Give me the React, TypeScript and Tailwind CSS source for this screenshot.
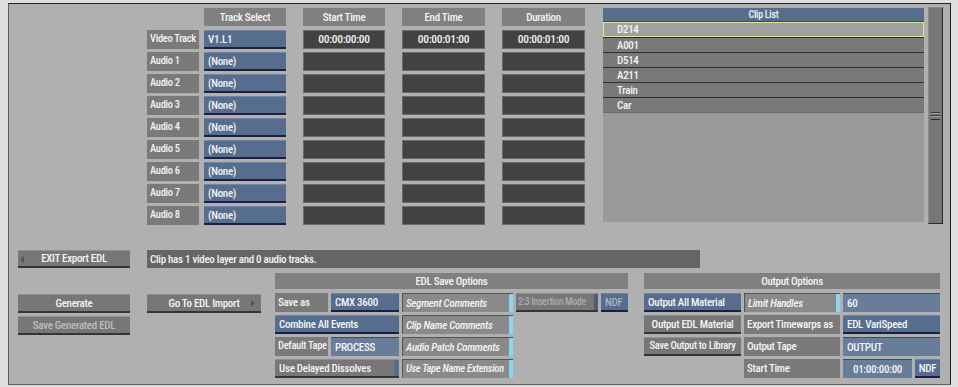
import React from "react";

const font = "font-['Liberation_Sans_Narrow','Roboto_Condensed',Roboto,sans-serif]";

const tracks = ["Video Track", "Audio 1", "Audio 2", "Audio 3", "Audio 4", "Audio 5", "Audio 6", "Audio 7", "Audio 8"];
const clips = ["D214", "A001", "D514", "A211", "Train", "Car"];

type Box = { w: string; children?: React.ReactNode; className?: string };

const Label = ({ w, children, className = "" }: Box) => (
  <div className={`${w} h-[19px] flex items-center px-[3px] bg-[#7a7a7a] text-[#f4f4f4] whitespace-nowrap overflow-hidden ${className}`}>
    {children}
  </div>
);

const BlueBtn = ({ w, children, className = "" }: Box) => (
  <div
    className={`${w} h-[19px] flex items-center px-[4px] bg-[#566d8e] border-t border-t-[#7084a3] border-b-2 border-b-[#1c2040] text-[#f4f4f4] whitespace-nowrap ${className}`}
  >
    {children}
  </div>
);

const GrayBtn = ({ w, children, className = "" }: Box) => (
  <div
    className={`${w} h-[19px] flex items-center justify-center bg-[#777777] border-t border-t-[#8e8e8e] border-b-2 border-b-[#353535] text-[#f4f4f4] whitespace-nowrap ${className}`}
  >
    {children}
  </div>
);

const Field = ({ w, children, className = "" }: Box) => (
  <div
    className={`${w} h-[19px] flex items-center px-[4px] bg-[#687d99] border-t border-t-[#3c4b60] text-[#f4f4f4] whitespace-nowrap ${className}`}
  >
    {children}
  </div>
);

const Toggle = ({ w, children, className = "" }: Box) => (
  <div className={`${w} h-[19px] flex bg-[#8a8a8a] border-t border-l border-[#555555]`}>
    <div className={`flex-1 flex items-center px-[3px] italic text-[#f4f4f4] whitespace-nowrap overflow-hidden ${className}`}>
      {children}
    </div>
    <div className="w-[4px] bg-[#86d8f2]" />
  </div>
);

const TimeCell = ({ w, children }: Box) => (
  <div className={`${w} h-[19px] flex items-center justify-center bg-[#424242] border border-[#6a6a6a] text-[#f4f4f4] text-[11.5px]`}>
    {children}
  </div>
);

const Header = ({ w, children }: Box) => (
  <div className={`${w} h-[18px] flex items-center justify-center bg-[#808080] text-[#f4f4f4]`}>{children}</div>
);

export default function App() {
  return (
    <div className={`w-[958px] h-[387px] bg-[#dedede] pt-[3px] pl-[8px] text-[11px] tracking-[-0.3px] font-medium leading-none ${font}`}>
      <div className="w-[943px] h-[382px] bg-[#b0b0b0] border border-t-[#222222] border-r-[#222222] border-l-[#5e5e5e] border-b-[#5e5e5e]">
        {/* top: track table, clip list, scrollbar */}
        <div className="h-[222px] pt-[4px] flex items-start">
          <div className="ml-[138px] flex flex-col gap-[3px]">
            <div className="flex mb-[1px]">
              <div className="w-[52px]" />
              <Header w="ml-[5px] w-[82px]">Track Select</Header>
              <Header w="ml-[17px] w-[82px]">Start Time</Header>
              <Header w="ml-[17px] w-[83px]">End Time</Header>
              <Header w="ml-[17px] w-[83px]">Duration</Header>
            </div>
            {tracks.map((t, i) => (
              <div key={t} className="flex">
                <Label w="w-[52px]" className="text-[10.5px]">{t}</Label>
                <BlueBtn w="ml-[5px] w-[82px]">{i === 0 ? "V1.L1" : "(None)"}</BlueBtn>
                <TimeCell w="ml-[17px] w-[82px]">{i === 0 ? "00:00:00:00" : ""}</TimeCell>
                <TimeCell w="ml-[17px] w-[83px]">{i === 0 ? "00:00:01:00" : ""}</TimeCell>
                <TimeCell w="ml-[17px] w-[83px]">{i === 0 ? "00:00:01:00" : ""}</TimeCell>
              </div>
            ))}
          </div>

          <div className="ml-[18px] w-[321px] h-[214px] bg-[#9a9a9a] flex flex-col">
            <div className="h-[14px] flex items-center justify-center bg-[#566d8e] border-b border-b-[#3a4a62] text-[#f4f4f4] text-[10px]">
              Clip List
            </div>
            {clips.map((c, i) => (
              <div
                key={c}
                className={
                  i === 0
                    ? "h-[15px] flex items-center pl-[13px] bg-[#a0a0a0] border border-[#e2e29a] text-[#f4f4f4]"
                    : "h-[15px] flex items-center pl-[14px] bg-[#797979] border-t border-t-[#2e2e2e] text-[#f4f4f4]"
                }
              >
                {c}
              </div>
            ))}
            <div className="h-[1px] bg-[#6c6c6c]" />
          </div>

          <div className="ml-[4px] -mt-[1px] w-[15px] h-[217px] bg-[#777777] border border-t-[#8c8c8c] border-l-[#8c8c8c] border-r-[#2a2a2a] border-b-[#2a2a2a] flex flex-col items-center justify-center">
            <div className="w-[9px] h-[1px] bg-[#3a3a3a]" />
            <div className="w-[9px] h-[1px] bg-[#9c9c9c]" />
            <div className="w-[9px] h-[1px] mt-[1px] bg-[#3a3a3a]" />
            <div className="w-[9px] h-[1px] bg-[#9c9c9c]" />
            <div className="w-[9px] h-[1px] mt-[2px] bg-[#2a2a2a]" />
          </div>
        </div>

        {/* middle: exit + message */}
        <div className="mt-[24px] flex">
          <div className="ml-[9px] w-[112px] h-[18px] relative flex items-center justify-center bg-[#777777] border-t border-t-[#8e8e8e] border-b-2 border-b-[#353535] text-[#f4f4f4]">
            <svg className="absolute left-[2px] top-[5px]" width="4" height="7" viewBox="0 0 4 7">
              <path d="M4 0 L0 3.5 L4 7 Z" fill="#555555" />
            </svg>
            EXIT Export EDL
          </div>
          <div className="ml-[17px] w-[553px] h-[18px] flex items-center px-[3px] bg-[#656565] text-[#f4f4f4]">
            Clip has 1 video layer and 0 audio tracks.
          </div>
        </div>

        {/* bottom */}
        <div className="mt-[5px] flex items-start">
          <div className="ml-[9px] w-[112px] pt-[21px] flex flex-col gap-[3px]">
            <GrayBtn w="w-[112px]">Generate</GrayBtn>
            <GrayBtn w="w-[112px]">
              <span className="text-[#bdbdbd]">Save Generated EDL</span>
            </GrayBtn>
          </div>

          <div className="ml-[17px] pt-[21px]">
            <GrayBtn w="w-[114px] relative">
              Go To EDL Import
              <svg className="absolute right-[6px] top-[5px]" width="4" height="7" viewBox="0 0 4 7">
                <path d="M0 0 L4 3.5 L0 7 Z" fill="#555555" />
              </svg>
            </GrayBtn>
          </div>

          <div className="ml-[14px] w-[353px] flex flex-col gap-[3px]">
            <div className="h-[16px] mb-[1px] flex items-center justify-center bg-[#808080] text-[#f4f4f4]">
              EDL Save Options
            </div>
            <div className="flex gap-[3px]">
              <Label w="w-[53px]">Save as</Label>
              <BlueBtn w="w-[68px]">CMX 3600</BlueBtn>
              <Toggle w="w-[111px]">Segment Comments</Toggle>
              <div className="w-[82px] h-[19px] flex bg-[#777777] border-t border-t-[#8e8e8e] border-b-2 border-b-[#353535]">
                <div className="flex-1 flex items-center pl-[2px] text-[10px] tracking-[-0.4px] text-[#ababab] whitespace-nowrap">
                  2:3 Insertion Mode
                </div>
                <div className="w-[4px] bg-[#4c5c7a]" />
              </div>
              <BlueBtn w="w-[27px]">
                <span className="text-[#aab4c4]">NDF</span>
              </BlueBtn>
            </div>
            <div className="flex gap-[3px]">
              <BlueBtn w="w-[124px]">Combine All Events</BlueBtn>
              <Toggle w="w-[111px]">Clip Name Comments</Toggle>
            </div>
            <div className="flex gap-[3px]">
              <Label w="w-[53px]" className="px-[2px] text-[10.5px]">Default Tape</Label>
              <Field w="w-[68px]">PROCESS</Field>
              <Toggle w="w-[111px]">Audio Patch Comments</Toggle>
            </div>
            <div className="flex gap-[3px]">
              <div className="w-[124px] h-[19px] flex bg-[#777777] border-t border-t-[#8e8e8e] border-b-2 border-b-[#353535]">
                <div className="flex-1 flex items-center px-[4px] text-[#f4f4f4] whitespace-nowrap">Use Delayed Dissolves</div>
                <div className="w-[5px] bg-[#566d8e]" />
              </div>
              <Toggle w="w-[111px]" className="text-[10.5px]">Use Tape Name Extension</Toggle>
            </div>
          </div>

          <div className="ml-[16px] w-[296px] flex flex-col gap-[3px]">
            <div className="h-[16px] mb-[1px] flex items-center justify-center bg-[#808080] text-[#f4f4f4]">
              Output Options
            </div>
            <div className="flex gap-[3px]">
              <BlueBtn w="w-[97px]">Output All Material</BlueBtn>
              <Toggle w="w-[96px]">Limit Handles</Toggle>
              <Field w="w-[97px]">60</Field>
            </div>
            <div className="flex gap-[3px]">
              <GrayBtn w="w-[97px]">Output EDL Material</GrayBtn>
              <Label w="w-[96px]">Export Timewarps as</Label>
              <BlueBtn w="w-[97px]">EDL VariSpeed</BlueBtn>
            </div>
            <div className="flex gap-[3px]">
              <GrayBtn w="w-[97px]" className="text-[10.5px]">Save Output to Library</GrayBtn>
              <Label w="w-[96px]">Output Tape</Label>
              <Field w="w-[97px]">OUTPUT</Field>
            </div>
            <div className="flex gap-[3px]">
              <div className="w-[97px]" />
              <Label w="w-[96px]">Start Time</Label>
              <Field w="w-[69px]" className="justify-center">
                01:00:00:00
              </Field>
              <BlueBtn w="w-[25px]" className="justify-center px-0">
                NDF
              </BlueBtn>
            </div>
          </div>
        </div>
      </div>
    </div>
  );
}
